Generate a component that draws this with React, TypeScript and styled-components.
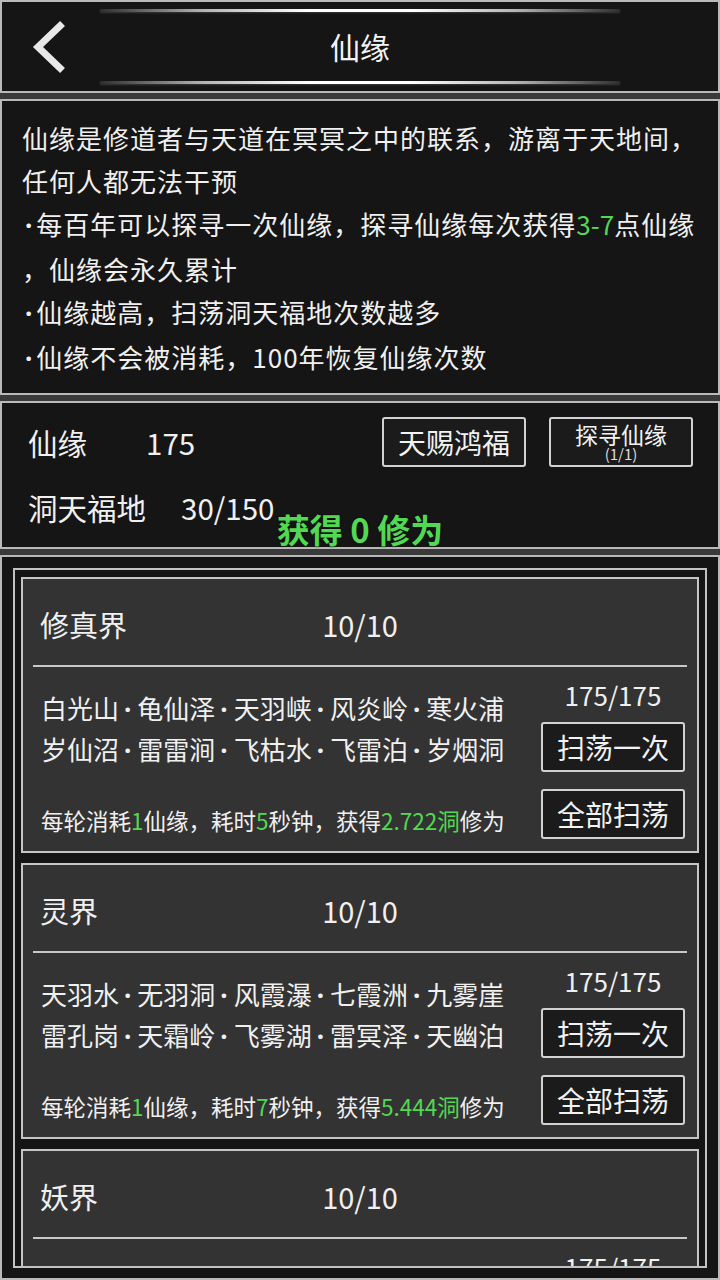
import React from 'react'
import styled, { createGlobalStyle } from 'styled-components'

const GlobalStyle = createGlobalStyle`
  html, body {
    margin: 0;
    padding: 0;
    background: #3a3a3a;
  }
  body {
    font-family: "Noto Sans CJK SC", "Noto Sans", sans-serif;
    color: #f0f0f0;
  }
`

const GREEN = '#52d852'

const Page = styled.div`
  position: relative;
  width: 720px;
  height: 1280px;
  overflow: hidden;
  background: #3a3a3a;
  display: flex;
  flex-direction: column;
  gap: 6px;
`

const Panel = styled.section`
  box-sizing: border-box;
  flex-shrink: 0;
  background: #151515;
  border: 2px solid #b9b9b9;
`

const Header = styled(Panel)`
  height: 93px;
  padding: 7px 0 7px;
  display: flex;
  flex-direction: column;
`

const GlowLine = styled.div`
  width: 520px;
  height: 3px;
  margin: 0 auto;
  background: linear-gradient(
    90deg,
    rgba(120, 120, 120, 0.25) 0%,
    rgba(220, 220, 220, 0.8) 20%,
    #ffffff 40%,
    #ffffff 60%,
    rgba(220, 220, 220, 0.8) 80%,
    rgba(120, 120, 120, 0.25) 100%
  );
  box-shadow: 0 1px 2px rgba(255, 255, 255, 0.15);
`

const HeaderRow = styled.div`
  flex: 1;
  display: grid;
  grid-template-columns: 1fr auto 1fr;
  align-items: center;
`

const BackButton = styled.div`
  padding-left: 29px;
  display: flex;
  align-items: center;
`

const Title = styled.h1`
  margin: 0;
  font-size: 30px;
  font-weight: 400;
  color: #f4f4f4;
  line-height: 40px;
  transform: translateY(-1px);
`

const Desc = styled(Panel)`
  height: 296px;
  padding: 15px 12px 0 20px;
  font-size: 26px;
  letter-spacing: 1px;
  line-height: 43px;
`

const DescLine = styled.div`
  white-space: nowrap;
`

const Dot = styled.span<{ $pad?: number }>`
  font-family: "Noto Sans", sans-serif;
  font-weight: 700;
  letter-spacing: 0;
  padding: 0 ${(p) => p.$pad ?? 4}px 0 ${(p) => (p.$pad ?? 4) - 1}px;
`

const Green = styled.span`
  color: ${GREEN};
  letter-spacing: 0;
`

const Stats = styled(Panel)`
  height: 148px;
  padding: 14px 25px 0 26px;
  display: flex;
  flex-direction: column;
`

const StatRow = styled.div<{ $h: number }>`
  height: ${(p) => p.$h}px;
  display: flex;
  align-items: center;
`

const StatLabel = styled.span<{ $gap: number }>`
  font-size: 29.5px;
  margin-right: ${(p) => p.$gap}px;
`

const StatValue = styled.span`
  font-size: 29.5px;
`

const StatButtons = styled.div`
  margin-left: auto;
  display: flex;
  gap: 23px;
`

const Button = styled.div<{ $size?: number }>`
  box-sizing: border-box;
  width: 144px;
  height: 50px;
  border: 2px solid #d2d2d2;
  border-radius: 3px;
  background: #1b1b1b;
  color: #f2f2f2;
  font-size: ${(p) => p.$size ?? 28}px;
  display: flex;
  flex-direction: column;
  align-items: center;
  justify-content: center;
  line-height: ${(p) => (p.$size ? '24px' : '1.1')};
`

const SubText = styled.span`
  font-size: 15px;
  line-height: 16px;
  color: #dcdcdc;
`

const Toast = styled.div`
  position: absolute;
  left: 0;
  right: 0;
  top: 507px;
  text-align: center;
  font-size: 33px;
  line-height: 44px;
  font-weight: 700;
  color: ${GREEN};
  text-shadow: 0 0 2px #0a0a0a;
  pointer-events: none;
`

const ListPanel = styled(Panel)`
  flex: 1 1 0;
  min-height: 0;
  padding: 11px 11px 10px;
  display: flex;
`

const Frame = styled.div`
  flex: 1;
  min-height: 0;
  box-sizing: border-box;
  border: 2px solid #c2c2c2;
  background: #151515;
  padding: 7px 6px 0;
  overflow: hidden;
  display: flex;
  flex-direction: column;
  gap: 10px;
`

const Card = styled.div`
  flex-shrink: 0;
  box-sizing: border-box;
  height: 276px;
  border: 2px solid #c6c6c6;
  background: #333333;
  display: flex;
  flex-direction: column;
`

const CardHead = styled.div`
  height: 86px;
  padding: 4px 17px 0;
  box-sizing: border-box;
  display: grid;
  grid-template-columns: 1fr auto 1fr;
  align-items: center;
  font-size: 29px;
`

const Divider = styled.div`
  height: 2px;
  margin: 0 10px;
  background: #c8c8c8;
`

const CardBody = styled.div`
  flex: 1;
  display: flex;
  padding: 0 12px 0 18px;
`

const Places = styled.div`
  flex: 1;
  display: flex;
  flex-direction: column;
  justify-content: space-between;
  padding: 21px 0 16px;
`

const PlaceLine = styled.div`
  font-size: 26px;
  line-height: 39px;
  white-space: nowrap;
`

const Info = styled.div`
  font-size: 22.5px;
  line-height: 30px;
  white-space: nowrap;
`

const Side = styled.div`
  width: 144px;
  display: flex;
  flex-direction: column;
  align-items: center;
  padding-top: 13px;
`

const Count = styled.div`
  font-size: 26px;
  line-height: 30px;
  margin-bottom: 12px;
`

const SideButtons = styled.div`
  display: flex;
  flex-direction: column;
  gap: 17px;
`

type Realm = {
  name: string
  places: string[][]
  time: number
  gain: string
}

const realms: Realm[] = [
  {
    name: '修真界',
    places: [
      ['白光山', '龟仙泽', '天羽峡', '风炎岭', '寒火浦'],
      ['岁仙沼', '雷雷涧', '飞枯水', '飞雷泊', '岁烟洞'],
    ],
    time: 5,
    gain: '2.722',
  },
  {
    name: '灵界',
    places: [
      ['天羽水', '无羽洞', '风霞瀑', '七霞洲', '九雾崖'],
      ['雷孔岗', '天霜岭', '飞雾湖', '雷冥泽', '天幽泊'],
    ],
    time: 7,
    gain: '5.444',
  },
  {
    name: '妖界',
    places: [
      ['青丘山', '妖月谷', '黑风岭', '赤焰洞', '幽冥泽'],
      ['万妖林', '血月湖', '狐仙洞', '狼牙岭', '蛇骨滩'],
    ],
    time: 9,
    gain: '8.166',
  },
]

function BackIcon() {
  return (
    <svg width="36" height="52" viewBox="0 0 36 52">
      <polyline
        points="29,5 7,26 29,47"
        fill="none"
        stroke="#e8e8e8"
        strokeWidth="7"
        strokeLinecap="square"
      />
    </svg>
  )
}

function RealmCard({ realm }: { realm: Realm }) {
  return (
    <Card>
      <CardHead>
        <span>{realm.name}</span>
        <span>10/10</span>
        <span />
      </CardHead>
      <Divider />
      <CardBody>
        <Places>
          <div>
            {realm.places.map((line, i) => (
              <PlaceLine key={i}>
                {line.map((p, j) => (
                  <React.Fragment key={p}>
                    {j > 0 && <Dot $pad={6}>·</Dot>}
                    {p}
                  </React.Fragment>
                ))}
              </PlaceLine>
            ))}
          </div>
          <Info>
            每轮消耗<Green>1</Green>仙缘，耗时<Green>{realm.time}</Green>秒钟，获得
            <Green>{realm.gain}洞</Green>修为
          </Info>
        </Places>
        <Side>
          <Count>175/175</Count>
          <SideButtons>
            <Button>扫荡一次</Button>
            <Button>全部扫荡</Button>
          </SideButtons>
        </Side>
      </CardBody>
    </Card>
  )
}

export default function App() {
  return (
    <Page>
      <GlobalStyle />
      <Header>
        <GlowLine />
        <HeaderRow>
          <BackButton>
            <BackIcon />
          </BackButton>
          <Title>仙缘</Title>
          <span />
        </HeaderRow>
        <GlowLine />
      </Header>

      <Desc>
        <DescLine>仙缘是修道者与天道在冥冥之中的联系，游离于天地间，</DescLine>
        <DescLine>任何人都无法干预</DescLine>
        <DescLine>
          <Dot>·</Dot>每百年可以探寻一次仙缘，探寻仙缘每次获得<Green>3-7</Green>点仙缘
        </DescLine>
        <DescLine>，仙缘会永久累计</DescLine>
        <DescLine>
          <Dot>·</Dot>仙缘越高，扫荡洞天福地次数越多
        </DescLine>
        <DescLine>
          <Dot>·</Dot>仙缘不会被消耗，100年恢复仙缘次数
        </DescLine>
      </Desc>

      <Stats>
        <StatRow $h={50}>
          <StatLabel $gap={59}>仙缘</StatLabel>
          <StatValue>175</StatValue>
          <StatButtons>
            <Button>天赐鸿福</Button>
            <Button $size={23}>
              探寻仙缘
              <SubText>(1/1)</SubText>
            </Button>
          </StatButtons>
        </StatRow>
        <StatRow $h={86}>
          <StatLabel $gap={35}>洞天福地</StatLabel>
          <StatValue>30/150</StatValue>
        </StatRow>
      </Stats>

      <ListPanel>
        <Frame>
          {realms.map((r) => (
            <RealmCard key={r.name} realm={r} />
          ))}
        </Frame>
      </ListPanel>

      <Toast>获得 0 修为</Toast>
    </Page>
  )
}
